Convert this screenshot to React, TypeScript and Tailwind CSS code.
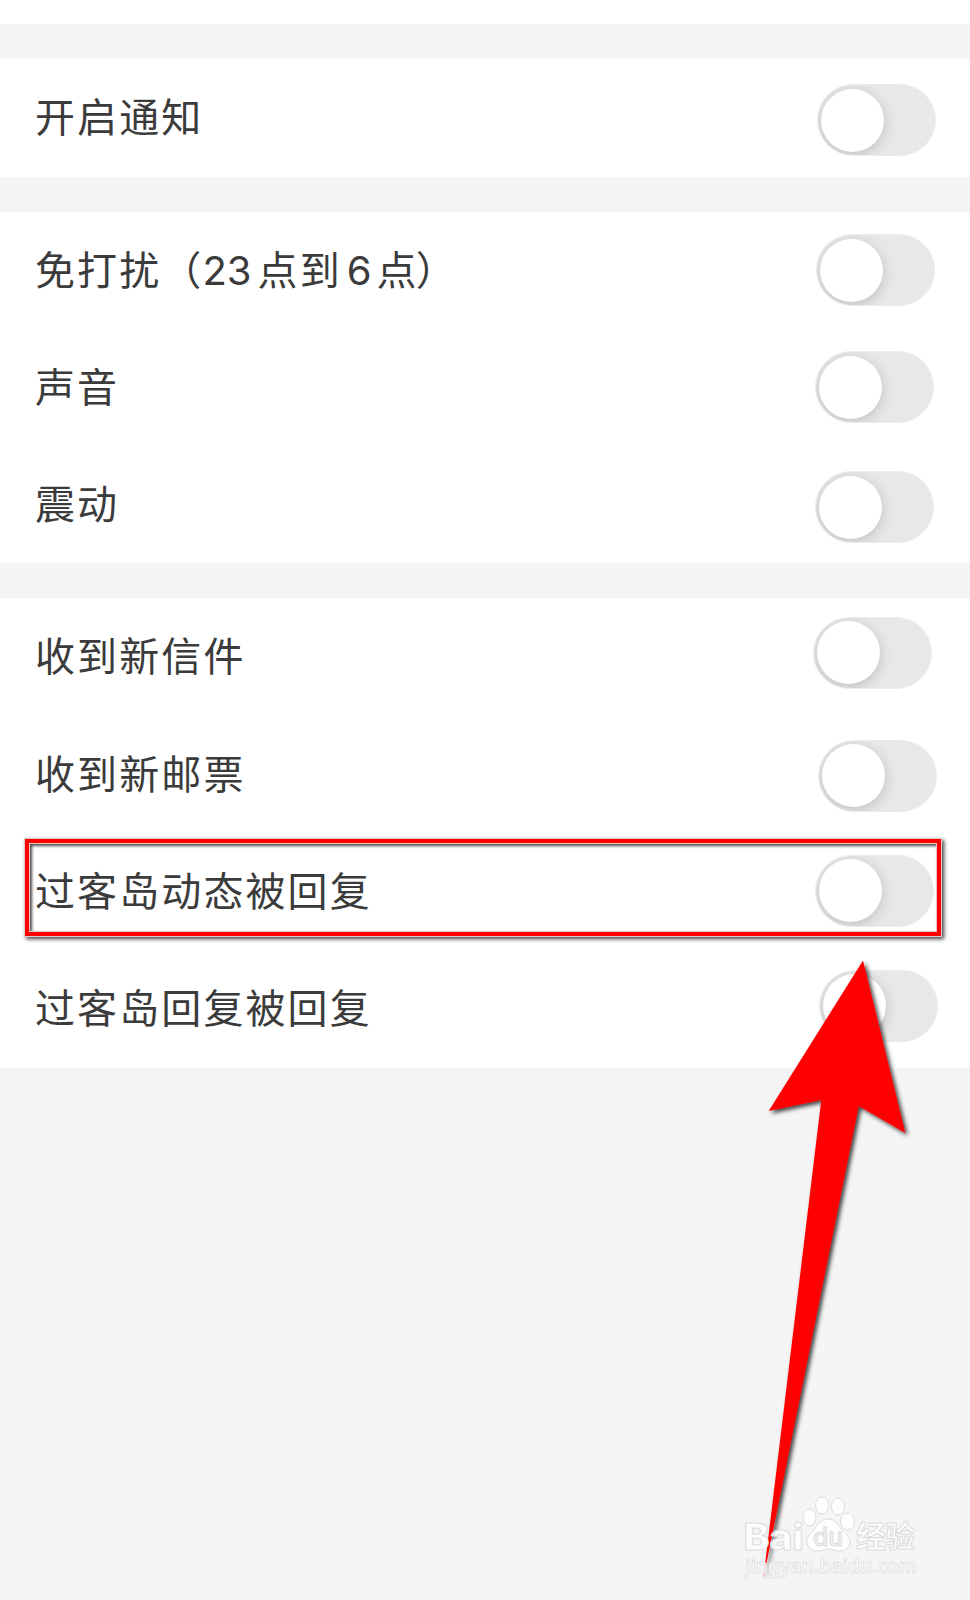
import { useState } from "react";

interface SettingRow {
  id: string;
  label: React.ReactNode;
  rowClass: string;
  switchClass: string;
  highlighted?: boolean;
}

const groups: SettingRow[][] = [
  [{ id: "notify", label: "开启通知", rowClass: "h-[118px]", switchClass: "mt-[25px] mr-[34px]" }],
  [
    {
      id: "dnd",
      label: (
        <>
          免打扰<span>（</span>
          <span className="-ml-px text-[40px] tracking-[0px]">23</span>
          <span className="ml-[6px]">点到</span>
          <span className="ml-[5px] mr-[4px] text-[40px] tracking-[1px]">6</span>
          点<span className="-ml-[3px]">）</span>
        </>
      ),
      rowClass: "h-[117px]",
      switchClass: "mt-[22px] mr-[35px]",
    },
    { id: "sound", label: "声音", rowClass: "h-[117px]", switchClass: "mt-[22px] mr-[36px]" },
    { id: "vibrate", label: "震动", rowClass: "h-[117.4px]", switchClass: "mt-[25px] mr-[36px]" },
  ],
  [
    { id: "letter", label: "收到新信件", rowClass: "h-[117.6px]", switchClass: "mt-[18.6px] mr-[38px]" },
    { id: "stamp", label: "收到新邮票", rowClass: "h-[117px]", switchClass: "mt-[24px] mr-[33px]" },
    {
      id: "post-reply",
      label: "过客岛动态被回复",
      rowClass: "h-[117px]",
      switchClass: "mt-[22px] mr-[36px]",
      highlighted: true,
    },
    { id: "comment-reply", label: "过客岛回复被回复", rowClass: "h-[118px]", switchClass: "mt-[20px] mr-[32px]" },
  ],
];

function Switch({ on, onToggle, className }: { on: boolean; onToggle: () => void; className: string }) {
  return (
    <button
      type="button"
      role="switch"
      aria-checked={on}
      onClick={onToggle}
      className={`flex h-[72px] w-[119px] shrink-0 overflow-hidden rounded-full border border-[#ececec] px-[3.4px] py-[3.5px] ${
        on ? "justify-end bg-green-500" : "bg-[#e8e8e8]"
      } ${className}`}
    >
      <span className="size-[63px] rounded-full bg-white shadow-[0_3px_14px_rgba(0,0,0,0.18)]" />
    </button>
  );
}

function Arrow() {
  return (
    <svg
      className="pointer-events-none absolute left-[740px] top-[940px]"
      width="200"
      height="660"
      viewBox="740 940 200 660"
    >
      <defs>
        <filter id="arrow-shadow" x="-20%" y="-5%" width="150%" height="110%">
          <feDropShadow dx="2.5" dy="2.5" stdDeviation="2" floodColor="#000" floodOpacity="0.75" />
        </filter>
      </defs>
      <path
        d="M863 960.5 L768.7 1111 L821.3 1100 L763.3 1579 L858.7 1106 L905.3 1133 Z"
        fill="#ff0000"
        filter="url(#arrow-shadow)"
      />
    </svg>
  );
}

function Watermark() {
  return (
    <svg
      className="pointer-events-none absolute left-[730px] top-[1480px]"
      width="220"
      height="110"
      viewBox="730 1480 220 110"
      fill="#ffffff"
      fillOpacity="0.85"
      stroke="#dcdcdc"
      strokeWidth="1"
    >
      <text
        x="743.5"
        y="1550"
        fontFamily="Inter, sans-serif"
        fontWeight="800"
        fontSize="37"
        textLength="60"
        lengthAdjust="spacingAndGlyphs"
      >
        Bai
      </text>
      <ellipse cx="809.5" cy="1517.5" rx="6.5" ry="8.5" />
      <ellipse cx="822" cy="1505.5" rx="6.5" ry="8.5" />
      <ellipse cx="838" cy="1506.5" rx="6.5" ry="8.5" />
      <ellipse cx="847.5" cy="1521.5" rx="7" ry="8.5" />
      <path d="M828 1519 C820 1519 817 1526 813 1531 C808 1536 806 1539 807 1543 C808 1549 813 1551 818 1551 C823 1551 825 1549 828 1549 C832 1549 834 1551 839 1551 C845 1551 850 1548 850 1542 C850 1537 846 1534 842 1530 C838 1525 836 1519 828 1519 Z" />
      <text
        x="813"
        y="1546"
        fontFamily="Inter, sans-serif"
        fontWeight="500"
        fontSize="25"
        fill="#f0f0f0"
        textLength="30"
        lengthAdjust="spacingAndGlyphs"
      >
        du
      </text>
      <text x="856" y="1547" fontFamily="Noto Sans CJK SC, sans-serif" fontWeight="700" fontSize="30" textLength="59">
        经验
      </text>
      <text
        x="745"
        y="1573"
        fontFamily="Noto Sans, sans-serif"
        fontWeight="600"
        fontSize="20"
        stroke="#e2e2e2"
        textLength="172"
        lengthAdjust="spacingAndGlyphs"
      >
        jingyan.baidu.com
      </text>
    </svg>
  );
}

export default function App() {
  const [enabled, setEnabled] = useState<Record<string, boolean>>({});

  const toggle = (id: string) => setEnabled((prev) => ({ ...prev, [id]: !prev[id] }));

  return (
    <div className="relative h-[1600px] w-[970px] overflow-hidden bg-[#f5f5f5] font-['Inter','Noto_Sans_CJK_SC',sans-serif] text-[#3b3b3b]">
      <div className="h-6 bg-white" />

      {groups.map((rows) => (
        <section key={rows[0].id} className="mt-[35px] bg-white">
          {rows.map((row) => (
            <div key={row.id} className={`relative flex items-start justify-between pl-[35px] ${row.rowClass}`}>
              <span className="flex h-[118px] items-center whitespace-nowrap text-[40px] leading-none tracking-[2.1px]">
                {row.label}
              </span>
              <Switch on={!!enabled[row.id]} onToggle={() => toggle(row.id)} className={row.switchClass} />

              {row.highlighted && (
                <div className="pointer-events-none absolute left-[25px] top-[6px] h-[97px] w-[916px] border-4 border-[#ff0000] shadow-[0_0_0_1px_#dfc9c4,inset_0_0_0_1px_#f0c4be,2px_2px_4px_1px_rgba(0,0,0,0.75),inset_2px_2px_3px_1px_rgba(0,0,0,0.7)]" />
              )}
            </div>
          ))}
        </section>
      ))}

      <Arrow />
      <Watermark />
    </div>
  );
}
